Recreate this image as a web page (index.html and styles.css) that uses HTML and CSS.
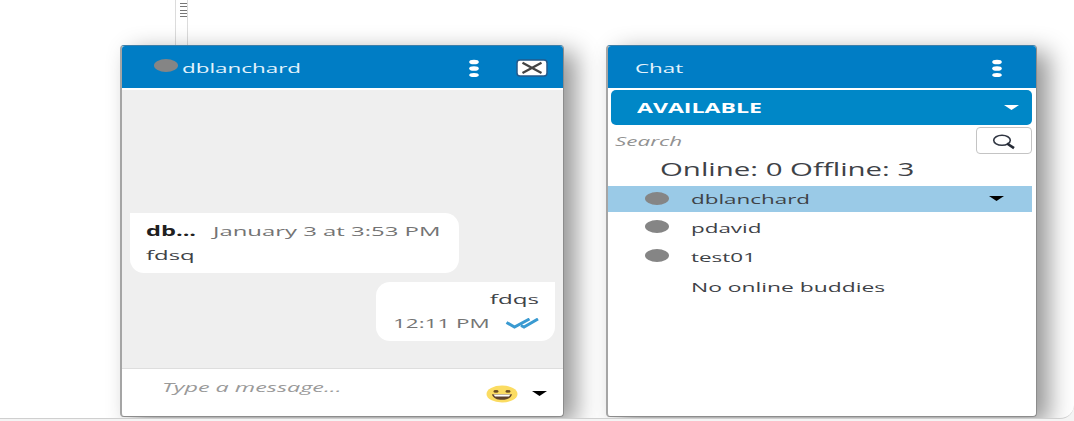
FILE: index.html
```
<!DOCTYPE html>
<html lang="en">
<head>
<meta charset="utf-8">
<title>Chat</title>
<link rel="stylesheet" href="styles.css">
</head>
<body>
<main class="stage">
  <div class="top"><div class="splitter"><i></i><i></i><i></i><i></i><i></i></div></div>
  <div class="panels">
    <section class="panel conversation">
      <header class="bar">
        <span class="presence"></span>
        <span class="text name">dblanchard</span>
        <svg class="more" width="12" height="18" viewBox="0 0 12 18"><g fill="#fff"><ellipse cx="6" cy="3" rx="4.8" ry="2.3"/><ellipse cx="6" cy="9.5" rx="4.8" ry="2.3"/><ellipse cx="6" cy="16" rx="4.8" ry="2"/></g></svg>
        <svg class="close" width="32" height="18" viewBox="0 0 32 18"><rect x="1" y="1" width="30" height="16" rx="3" fill="#fff" stroke="#24598a" stroke-width="1.5"/><path d="M6.5 3.7 25.5 14.1M25.5 3.7 6.5 14.1" stroke="#444" stroke-width="2.3" fill="none"/></svg>
      </header>
      <div class="messages">
        <article class="bubble received">
          <div class="meta"><b class="text sender">db...</b><time class="text date">January 3 at 3:53 PM</time></div>
          <div class="text body">fdsq</div>
        </article>
        <article class="bubble sent">
          <div class="text body">fdqs</div>
          <div class="meta"><time class="text time">12:11 PM</time><svg class="ticks" width="34" height="12" viewBox="0 0 34 12"><path d="M1.5 4.5 9.5 9 24.5 1M16 7.5 19 9 33 1" stroke="#3a9ad1" stroke-width="3" fill="none"/></svg></div>
        </article>
      </div>
      <footer class="compose">
        <span class="text hint">Type a message...</span>
        <svg class="emoji" width="32" height="18" viewBox="0 0 32 18"><ellipse cx="16" cy="9" rx="15.5" ry="8.5" fill="#fbdc62"/><ellipse cx="10" cy="6.4" rx="2.6" ry="1.3" fill="#6b4d22"/><ellipse cx="22" cy="6.4" rx="2.6" ry="1.3" fill="#6b4d22"/><path d="M6 9.2h20c-1 4-5 5.6-10 5.6S7 13.2 6 9.2Z" fill="#60432a"/><path d="M7.5 9.5h17l-1.5 2H9Z" fill="#fff"/></svg>
        <svg class="caret" width="15" height="5" viewBox="0 0 15 5"><path d="M0 0h15L7.5 5Z"/></svg>
      </footer>
    </section>
    <section class="panel roster">
      <header class="bar">
        <span class="text title">Chat</span>
        <svg class="more" width="12" height="18" viewBox="0 0 12 18"><g fill="#fff"><ellipse cx="6" cy="3" rx="4.8" ry="2.3"/><ellipse cx="6" cy="9.5" rx="4.8" ry="2.3"/><ellipse cx="6" cy="16" rx="4.8" ry="2"/></g></svg>
      </header>
      <div class="status"><b class="text">AVAILABLE</b><svg width="15" height="5" viewBox="0 0 15 5"><path d="M0 0h15L7.5 5Z" fill="#fff"/></svg></div>
      <div class="search"><span class="text query">Search</span><button class="find" aria-label="Search"><svg width="24" height="16" viewBox="0 0 24 16"><ellipse cx="10" cy="6.3" rx="8.3" ry="5" fill="none" stroke="#303642" stroke-width="1.6"/><path d="M15 9.5 22 14.2" stroke="#252a35" stroke-width="2.6"/></svg></button></div>
      <div class="text counts">Online: 0 Offline: 3</div>
      <ul class="buddies">
        <li class="selected"><span class="presence"></span><span class="text wide">dblanchard</span><svg class="arrow" width="15" height="5" viewBox="0 0 15 5"><path d="M0 0h15L7.5 5Z"/></svg></li>
        <li><span class="presence"></span><span class="text">pdavid</span></li>
        <li><span class="presence"></span><span class="text">test01</span></li>
        <li class="empty"><span class="text">No online buddies</span></li>
      </ul>
    </section>
  </div>
</main>
</body>
</html>
```
FILE: styles.css
```
* { box-sizing: border-box; }
body { margin: 0; width: 1074px; height: 421px; overflow: hidden; background: #f4f4f4; font: 13.5px/20px "Open Sans", "Noto Sans", sans-serif; color: #3e4247; }
.stage { width: 1074px; height: 419px; overflow: hidden; background: #fff; border-bottom: 1px solid #cfcfcf; border-radius: 0 0 14px 0; }
.top { height: 45px; padding-left: 175px; }
.splitter { width: 13px; height: 45px; border: solid #dcdcdc; border-width: 0 1px; padding: 3px 0 0 4px; display: flex; flex-direction: column; gap: 2.3px; }
.splitter i { width: 7px; height: 1px; background: #777; }
.panels { display: flex; gap: 42px; padding-left: 120px; height: 372px; }
.panel { height: 372px; background: #fff; border: 1px solid #8c8c8c; border-top-color: #3d7fa9; border-left: 2px solid #a5a5a5; border-radius: 4px; box-shadow: 12px 7px 25px rgba(0,0,0,.42); }
.conversation { width: 444px; }
.roster { width: 431px; }
.text { display: block; white-space: nowrap; transform: scaleX(1.66); transform-origin: left center; }
.bar { height: 42px; background: #007dc5; border-radius: 3px 3px 0 0; display: flex; color: #e4f3fc; }
.presence { display: block; width: 24px; height: 13px; border-radius: 50%; background: #858585; flex: none; }
.conversation .presence { margin: 13px 0 0 32px; }
.name { width: 286px; margin: 12px 0 0 4px; }
.more { margin-top: 13px; flex: none; }
.close { margin: 13px 0 0 36px; flex: none; }
.messages { margin-top: 2px; height: 278px; background: #efefef; padding: 123px 8px 0; }
.bubble { background: #fff; }
.received { width: 329px; height: 60px; border-radius: 0 14px 14px 14px; padding: 8px 0 0 16px; }
.meta { display: flex; }
.sender { width: 67px; color: #202020; transform: scaleX(1.75); }
.date, .time { color: #747474; }
.date { transform: scaleX(1.77); }
.received .body { margin-top: 4px; transform: scaleX(1.77); }
.sent { width: 179px; height: 59px; margin: 9px 0 0 auto; border-radius: 14px 0 14px 14px; padding: 7px 16px 0 17px; }
.sent .body { transform: scaleX(1.79); transform-origin: right center; text-align: right; }
.sent .meta { margin-top: 4px; }
.time { width: 113px; }
.ticks { margin-top: 5px; flex: none; }
.compose { height: 48px; border-top: 1px solid #dedede; display: flex; }
.hint { width: 324px; margin: 8px 0 0 40px; color: #9a9a9a; font-style: italic; transform: scaleX(1.73); }
.emoji { margin-top: 16px; flex: none; }
.caret { margin: 22px 0 0 14px; flex: none; }
.title { width: 356px; margin: 12px 0 0 27px; }
.status { height: 35px; margin: 2px 4px 0 3px; border-radius: 5px; background: #0087c7; color: #fff; display: flex; justify-content: space-between; align-items: center; padding: 0 13px 0 26px; }
.status .text { transform: scaleX(1.71); }
.search { height: 28px; margin: 2px 4px 0 3px; display: flex; justify-content: space-between; }
.query { font-style: italic; color: #929292; margin: 4px 0 0 4px; }
.find { width: 56px; height: 27px; border: 1px solid #c4c4c4; border-radius: 4px; background: #fff; padding: 2px 0 0; display: flex; align-items: center; justify-content: center; }
.counts { font-size: 17.5px; line-height: 24px; margin: 2px 0 0 52px; transform: scaleX(1.68); }
.buddies { list-style: none; margin: 5px 0 0; padding: 0 4px 0 0; }
.buddies li { height: 29.3px; display: flex; padding-left: 37px; }
.buddies li.selected { height: 26px; background: #9acae7; margin-bottom: 3px; }
.buddies .presence { margin: 6px 22px 0 0; }
.buddies li:not(.selected) .presence { margin-top: 5px; }
.buddies .text { margin-top: 3px; }
.buddies .wide { width: 298px; }
.buddies .arrow { margin-top: 10px; }
.buddies li.empty { padding-left: 83px; }
.empty .text { transform: scaleX(1.69); }
```
